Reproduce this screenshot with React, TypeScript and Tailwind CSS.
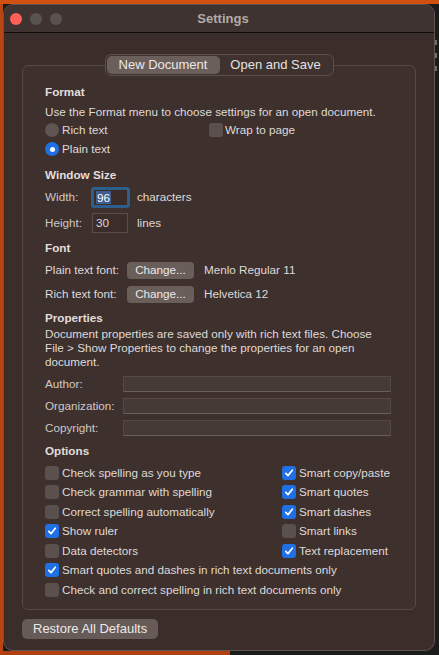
import React from "react";

const Check = ({ on }: { on: boolean }) => (
  <div
    className={
      "w-[14px] h-[14px] rounded-[3px] flex items-center justify-center shrink-0 " +
      (on ? "bg-[#1f6fe5]" : "bg-[#5a504e]")
    }
  >
    {on && (
      <svg width="10" height="10" viewBox="0 0 10 10">
        <path d="M1.8 5.3 L4 7.6 L8.3 2.2" stroke="white" strokeWidth="1.7" fill="none" strokeLinecap="round" strokeLinejoin="round" />
      </svg>
    )}
  </div>
);

const Radio = ({ on }: { on: boolean }) => (
  <div
    className={
      "w-[14px] h-[14px] rounded-full flex items-center justify-center shrink-0 " +
      (on ? "bg-[#1f6fe5]" : "bg-[#5f5553]")
    }
  >
    {on && <div className="w-[5px] h-[5px] rounded-full bg-white" />}
  </div>
);

const CheckRow = ({ on, label }: { on: boolean; label: string }) => (
  <div className="flex items-center gap-[2px] h-[19.5px]">
    <Check on={on} />
    <span className="ml-[1px]">{label}</span>
  </div>
);

const Field = ({ label }: { label: string }) => (
  <div className="flex items-center h-[18px]">
    <span className="w-[78px] text-[#cfc9c7]">{label}</span>
    <div className="w-[268px] h-[16px] bg-[#463a37] border border-[#554946] border-b-[#6a5e5b]" />
  </div>
);

export default function App() {
  return (
    <div
      className="w-[439px] h-[655px] flex flex-col bg-[#1b1b1b] overflow-hidden"
      style={{ fontFamily: '"Liberation Sans", Arial, sans-serif' }}
    >
      <div className="h-[4px] bg-[#d2500f] shrink-0" />
      <div className="flex flex-1 min-h-0">
        <div className="w-[3px] bg-[#b84612] shrink-0" />
        <div className="w-[432px] h-[647px] rounded-[10px] border border-[#5f5553] bg-[#3b2d2a] overflow-hidden flex flex-col shrink-0">
          {/* title bar */}
          <div className="h-[28px] bg-[#3e3331] border-b border-b-[#0f0b0a] flex items-center shrink-0">
            <div className="flex items-center gap-[8px] pl-[6px]">
              <div className="w-[12px] h-[12px] rounded-full bg-[#fe5f57]" />
              <div className="w-[12px] h-[12px] rounded-full bg-[#5a5250]" />
              <div className="w-[12px] h-[12px] rounded-full bg-[#5a5250]" />
            </div>
            <div className="flex-1 text-center text-[13px] font-bold text-[#b3aba8] pr-[50px]">
              Settings
            </div>
          </div>

          {/* content */}
          <div className="flex flex-col px-[18px] pt-[21px] text-[11.7px] text-[#dedad8]">
            <div className="flex justify-center relative z-10">
              <div className="flex h-[22px] rounded-[6px] border border-[#5c504d] bg-[#3e312e] p-[1px] text-[13px]">
                <div className="w-[113px] rounded-[5px] bg-[#6b5f5c] flex items-center justify-center text-[#ebe7e6]">
                  New Document
                </div>
                <div className="w-[112px] flex items-center justify-center text-[#e6e2e0]">
                  Open and Save
                </div>
              </div>
            </div>

            <div className="-mt-[11px] rounded-[6px] border border-[#564946] bg-[#3e302d] pt-[18px] pl-[22px] pr-[10px] pb-[9px] flex flex-col">
              <div className="h-[16px] leading-[16px] font-bold text-[#e2dedc]">Format</div>
              <div className="h-[16px] leading-[16px] mt-[4px]">
                Use the Format menu to choose settings for an open document.
              </div>
              <div className="flex items-center h-[16px] mt-[2px]">
                <div className="flex items-center gap-[3px] w-[164px]">
                  <Radio on={false} />
                  <span>Rich text</span>
                </div>
                <div className="flex items-center gap-[2px]">
                  <Check on={false} />
                  <span>Wrap to page</span>
                </div>
              </div>
              <div className="flex items-center gap-[3px] h-[16px] mt-[3px]">
                <Radio on={true} />
                <span>Plain text</span>
              </div>

              <div className="h-[16px] leading-[16px] font-bold text-[#e2dedc] mt-[10px]">Window Size</div>
              <div className="flex items-center h-[22px] mt-[3px]">
                <span className="w-[46px] text-[#cfc9c7]">Width:</span>
                <div className="w-[39px] h-[21px] rounded-[3px] border-[3px] border-[#2c5f8c] bg-[#3a2c29] flex items-center pl-[2px]">
                  <span className="bg-[#3f5f8f] text-white leading-[13px] px-[1px]">96</span>
                </div>
                <span className="ml-[7px]">characters</span>
              </div>
              <div className="flex items-center h-[22px] mt-[4px]">
                <span className="w-[47px] text-[#cfc9c7]">Height:</span>
                <div className="w-[36px] h-[20px] border border-[#5a4e4b] bg-[#3a2d2a] flex items-center pl-[3px]">
                  30
                </div>
                <span className="ml-[9px]">lines</span>
              </div>

              <div className="h-[16px] leading-[16px] font-bold text-[#e2dedc] mt-[6px]">Font</div>
              <div className="flex items-center h-[18px] mt-[5px]">
                <span className="w-[82px]">Plain text font:</span>
                <div className="w-[67px] h-[17px] rounded-[4px] bg-[#6a5e5b] flex items-center justify-center text-[#ece8e7]">
                  Change...
                </div>
                <span className="ml-[10px]">Menlo Regular 11</span>
              </div>
              <div className="flex items-center h-[18px] mt-[6px]">
                <span className="w-[82px]">Rich text font:</span>
                <div className="w-[67px] h-[17px] rounded-[4px] bg-[#6a5e5b] flex items-center justify-center text-[#ece8e7]">
                  Change...
                </div>
                <span className="ml-[10px]">Helvetica 12</span>
              </div>

              <div className="h-[16px] leading-[16px] font-bold text-[#e2dedc] mt-[7px]">Properties</div>
              <div className="leading-[14px] mt-[1px] w-[340px]">
                Document properties are saved only with rich text files. Choose File &gt; Show Properties to change the properties for an open document.
              </div>
              <div className="mt-[6px]">
                <Field label="Author:" />
              </div>
              <div className="mt-[4px]">
                <Field label="Organization:" />
              </div>
              <div className="mt-[4px]">
                <Field label="Copyright:" />
              </div>

              <div className="h-[16px] leading-[16px] font-bold text-[#e2dedc] mt-[6px]">Options</div>
              <div className="mt-[4px] flex">
                <div className="w-[237px] flex flex-col">
                  <CheckRow on={false} label="Check spelling as you type" />
                  <CheckRow on={false} label="Check grammar with spelling" />
                  <CheckRow on={false} label="Correct spelling automatically" />
                  <CheckRow on={true} label="Show ruler" />
                  <CheckRow on={false} label="Data detectors" />
                </div>
                <div className="flex flex-col">
                  <CheckRow on={true} label="Smart copy/paste" />
                  <CheckRow on={true} label="Smart quotes" />
                  <CheckRow on={true} label="Smart dashes" />
                  <CheckRow on={false} label="Smart links" />
                  <CheckRow on={true} label="Text replacement" />
                </div>
              </div>
              <CheckRow on={true} label="Smart quotes and dashes in rich text documents only" />
              <CheckRow on={false} label="Check and correct spelling in rich text documents only" />
            </div>

            <div className="mt-[9px] flex">
              <div className="h-[20px] px-[11px] rounded-[5px] bg-[#675b58] flex items-center text-[13px] text-[#ece8e7]">
                Restore All Defaults
              </div>
            </div>
          </div>
        </div>
        <div className="flex-1 bg-[#1b1b1b] flex flex-col pt-[36px] gap-[8px]">
          <div className="w-[2px] h-[5px] bg-[#6d6d6d]" />
          <div className="w-[2px] h-[5px] bg-[#6d6d6d]" />
          <div className="w-[2px] h-[5px] bg-[#6d6d6d]" />
        </div>
      </div>
      <div className="h-[4px] flex shrink-0">
        <div className="w-[230px] bg-[#b23f10]" />
        <div className="flex-1 bg-[#1b1b1b]" />
      </div>
    </div>
  );
}
